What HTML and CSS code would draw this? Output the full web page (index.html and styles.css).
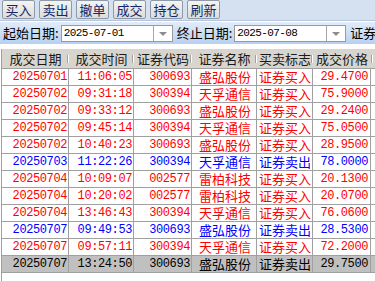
FILE: index.html
```html
<!DOCTYPE html>
<html lang="zh-CN">
<head>
    <meta charset="UTF-8">
    <meta name="viewport" content="width=device-width, initial-scale=1.0">
    <title>成交查询</title>
<link rel="stylesheet" href="styles.css">
</head>
<body>
    <div class="toolbar">
        <button class="tool">买入</button>
        <button class="tool">卖出</button>
        <button class="tool">撤单</button>
        <button class="tool">成交</button>
        <button class="tool">持仓</button>
        <button class="tool">刷新</button>
    </div>

    <div class="filter">
        <span class="label">起始日期:</span>
        <div class="datebox">
            <span class="date">2025-07-01</span>
            <span class="drop"></span>
        </div>
        <span class="label">终止日期:</span>
        <div class="datebox">
            <span class="date">2025-07-08</span>
            <span class="drop"></span>
        </div>
        <span class="label">证券代码:</span>
    </div>

    <div class="grid">
        <div class="head">
            <div class="hc c1">成交日期</div>
            <div class="hc c2">成交时间</div>
            <div class="hc c3">证券代码</div>
            <div class="hc c4">证券名称</div>
            <div class="hc c5">买卖标志</div>
            <div class="hc c6">成交价格</div>
            <div class="hc c7">成交数量</div>
        </div>
        <div class="rows" id="rows"></div>
    </div>

<script>

const trades = [
    ['20250701', '11:06:05', '300693', '盛弘股份', '证券买入', '29.4700'],
    ['20250702', '09:31:18', '300394', '天孚通信', '证券买入', '75.9000'],
    ['20250702', '09:33:12', '300693', '盛弘股份', '证券买入', '29.2400'],
    ['20250702', '09:45:14', '300394', '天孚通信', '证券买入', '75.0500'],
    ['20250702', '10:40:23', '300693', '盛弘股份', '证券买入', '28.9500'],
    ['20250703', '11:22:26', '300394', '天孚通信', '证券卖出', '78.0000'],
    ['20250704', '10:09:07', '002577', '雷柏科技', '证券买入', '20.1300'],
    ['20250704', '10:20:02', '002577', '雷柏科技', '证券买入', '20.0700'],
    ['20250704', '13:46:43', '300394', '天孚通信', '证券买入', '76.0600'],
    ['20250707', '09:49:53', '300693', '盛弘股份', '证券卖出', '28.5300'],
    ['20250707', '09:57:11', '300394', '天孚通信', '证券买入', '72.2000'],
    ['20250707', '13:24:50', '300693', '盛弘股份', '证券卖出', '29.7500']
];

const rows = document.getElementById('rows');

trades.forEach((t, i) => {
    const row = document.createElement('div');
    row.className = 'row ' + (t[4] === '证券买入' ? 'buy' : 'sell');
    if (i === trades.length - 1) row.classList.add('selected');

    const cls = ['c1 num', 'c2 num', 'c3 num', 'c4', 'c5', 'c6 num', 'c7'];
    cls.forEach((c, j) => {
        const cell = document.createElement('div');
        cell.className = 'cell ' + c;
        cell.textContent = t[j] || '';
        row.appendChild(cell);
    });
    rows.appendChild(row);
});

</script>
</body>
</html>
```

FILE: styles.css
```css
body {
    margin: 0;
    width: 375px;
    height: 281px;
    overflow: hidden;
    background: white;
    font-family: "Noto Sans CJK SC", sans-serif;
    font-size: 13px;
}

.toolbar {
    display: flex;
    gap: 4px;
    height: 21px;
    padding-left: 2px;
    background: #d5e0f0;
    border-bottom: 1px solid #b7c6dc;
    box-sizing: border-box;
}

.tool {
    width: 33px;
    height: 19px;
    padding: 0;
    font-family: "Noto Sans CJK SC", sans-serif;
    font-size: 13px;
    line-height: 17px;
    color: #10286e;
    background: linear-gradient(#f4f4f2, #dcdcd8);
    border: 1px solid #8e9aaa;
    border-radius: 2px;
}

.filter {
    display: flex;
    align-items: center;
    height: 23px;
    padding-left: 3px;
    white-space: nowrap;
    overflow: hidden;
    background: linear-gradient(#e2ecf9, #b7d0f1);
    border-top: 1px solid #ffffff;
    box-sizing: border-box;
}

.label {
    line-height: 16px;
    color: #000;
}

.datebox {
    display: flex;
    width: 112px;
    height: 17px;
    margin: 0 4px 0 2px;
    flex-shrink: 0;
    background: white;
    border: 1px solid #9a9a9a;
    box-sizing: border-box;
}

.date {
    flex: 1;
    padding-left: 2px;
    font-family: "Liberation Mono", monospace;
    font-size: 11px;
    letter-spacing: -0.6px;
    line-height: 15px;
    color: #000;
}

.drop {
    position: relative;
    width: 18px;
    border-left: 1px solid #a8a8a8;
}

.drop::after {
    content: "";
    position: absolute;
    left: 5px;
    top: 6px;
    border-left: 4px solid transparent;
    border-right: 4px solid transparent;
    border-top: 4px solid #8c8c8c;
}

.grid {
    margin: 5px 0 0 1px;
    border-left: 1px solid #a0a0a0;
    height: 232px;
    overflow: hidden;
}

.head {
    display: flex;
    height: 19px;
    background: #d8d5cf;
    color: #1a1a1a;
}

.hc {
    position: relative;
    flex-shrink: 0;
    line-height: 19px;
    text-align: center;
    white-space: nowrap;
    overflow: hidden;
}

.hc::after {
    content: "";
    position: absolute;
    right: 0;
    top: 6px;
    height: 8px;
    border-left: 1px solid #a4a19b;
    border-right: 1px solid #ffffff;
}

.rows {
    border-top: 1px solid #a0a0a0;
}

.row {
    display: flex;
    height: 16px;
    border-bottom: 1px solid #a0a0a0;
}

.cell {
    flex-shrink: 0;
    height: 16px;
    line-height: 16px;
    text-align: right;
    padding-right: 1px;
    border-right: 1px solid #a0a0a0;
    box-sizing: border-box;
    white-space: nowrap;
    overflow: hidden;
}

.num {
    font-family: "Liberation Mono", monospace;
    font-size: 12px;
    letter-spacing: -0.4px;
}

.c1 { width: 67px; }
.c2 { width: 65px; }
.c3 { width: 58px; }
.c4 { width: 65px; padding-right: 5px; }
.c5 { width: 56px; }
.c6 { width: 58px; padding-right: 2px; }
.c7 { width: 70px; }

.hc.c4 { padding-right: 0; }
.hc.c7 { text-align: left; padding-left: 3px; }

.buy {
    color: #ff0000;
}

.sell {
    color: #0000ff;
}

.row.selected {
    background: #c0c0c0;
    color: #000;
}
```
